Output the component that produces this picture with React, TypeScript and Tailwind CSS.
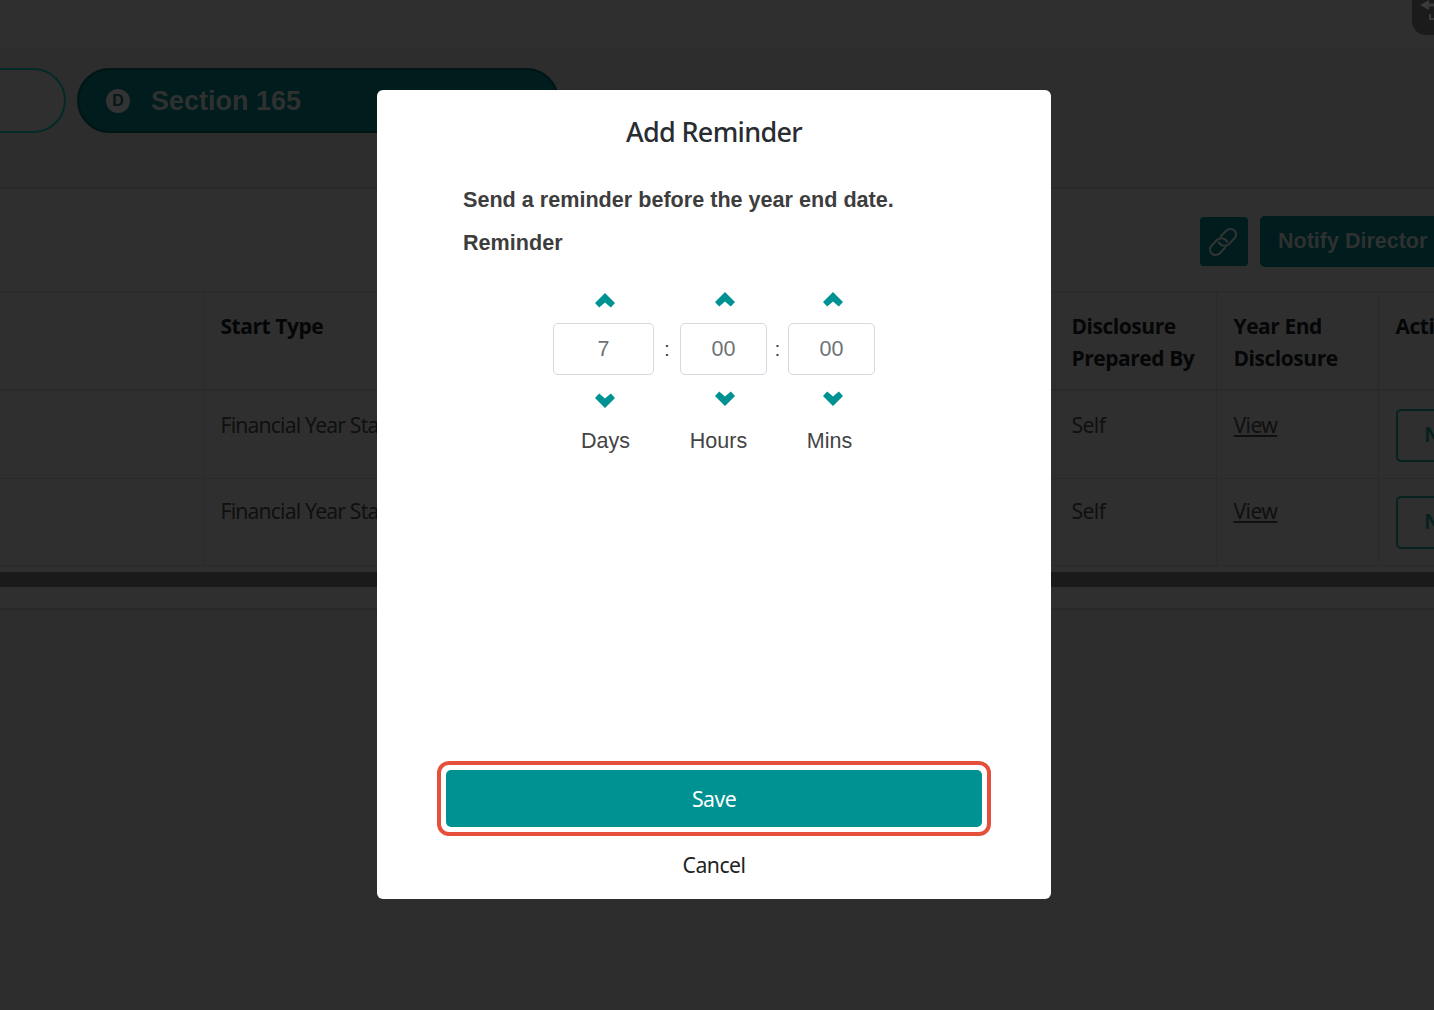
import React, { useState } from 'react';

interface StepperProps {
  label: string;
  value: string;
  width: string;
  up: string;
  down: string;
  onUp: () => void;
  onDown: () => void;
  labelClass: string;
}

const Chevron = ({ down = false }: { down?: boolean }) => (
  <svg width="20" height="15" viewBox="0 0 20 15" fill="#009292" className={down ? 'rotate-180' : ''}>
    <path d="M10 0 L20 10 L15.8 14.4 L10 9.4 L4.2 14.4 L0 10 Z" />
  </svg>
);

const Stepper: React.FC<StepperProps> = ({ label, value, width, up, down, onUp, onDown, labelClass }) => (
  <div className={`flex flex-col items-center ${width}`}>
    <button onClick={onUp} className={`h-[15px] ${up}`}>
      <Chevron />
    </button>
    <input
      readOnly
      value={value}
      className="h-[52px] w-full rounded-[5px] border-[1.5px] border-[#d3d9df] text-center text-[21.5px] text-[#6c7278]"
    />
    <button onClick={onDown} className={`h-[15px] ${down}`}>
      <Chevron down />
    </button>
    <span className={`text-[21.5px] leading-8 text-[#444] ${labelClass}`}>{label}</span>
  </div>
);

const rows = [
  { startType: 'Financial Year Start', preparedBy: 'Self', height: 'h-[89px]', textPad: 'pt-[18px]', buttonPad: 'pt-[18px]' },
  { startType: 'Financial Year Start', preparedBy: 'Self', height: 'h-[87px]', textPad: 'pt-[16px]', buttonPad: 'pt-[17px]' },
];

const pad = (n: number) => String(n).padStart(2, '0');

export default function App() {
  const [days, setDays] = useState(7);
  const [hours, setHours] = useState(0);
  const [mins, setMins] = useState(0);

  return (
    <div className="relative h-[1010px] w-[1434px] overflow-hidden bg-[#2d2d2d] font-['Liberation_Sans',sans-serif]">
      {/* Page behind the dialog */}
      <header className="flex h-[47px] justify-end bg-[#2f2f2f]">
        <div className="h-[35px] w-[22px] overflow-hidden rounded-bl-[14px] bg-[#1b1b1b]">
          <svg width="22" height="35" viewBox="0 0 22 35" fill="#3a3a3a">
            <path d="M8 5 L17 0 V3.5 H22 V6.5 H17 V10 Z" />
            <path d="M17 14 h2 v4 h3 v2 h-5 Z" />
          </svg>
        </div>
      </header>

      <nav className="flex h-[140px] gap-[11px] pt-[21px]">
        <div className="h-[65px] w-[66px] rounded-r-full border-[2.5px] border-l-0 border-[#022b27] bg-[#2f2f2f]" />
        <div className="flex h-[65px] w-[482px] items-center rounded-full border-2 border-[#011514] bg-[#001c1c] pl-7">
          <span className="-ml-px flex size-6 items-center justify-center rounded-full bg-[#333] text-[16px] font-bold text-[#061717]">D</span>
          <span className="mt-px ml-[21px] text-[27px] font-bold text-[#2f3131]">Section 165</span>
        </div>
      </nav>

      <main className="h-[423px] border-y-2 border-[#292929] bg-[#2f2f2f]">
        <div className="flex h-[102px] pt-[27px] pl-[1200px]">
          <div className="mt-px flex h-[49px] w-12 shrink-0 items-center justify-center rounded bg-[#001c1c]">
            <svg width="30" height="30" viewBox="0 0 30 30" fill="none" stroke="#333535" strokeWidth="2.1" strokeLinecap="round" className="-ml-0.5">
              <path d="M12.8 9.2 L18.2 3.8 C20.6 1.4 24.2 1.4 26.4 3.6 C28.6 5.8 28.6 9.2 26.3 11.6 L21 17 C18 19.8 13.2 19.3 10.8 15.4" />
              <path d="M17.2 20.8 L11.8 26.2 C9.4 28.6 5.8 28.6 3.6 26.4 C1.4 24.2 1.4 20.8 3.7 18.4 L9 13 C12 10.2 16.8 10.7 19.2 14.6" />
            </svg>
          </div>
          <div className="ml-3 h-[51px] w-[200px] shrink-0 rounded-[5px] bg-[#001c1c] pl-[18px] text-[21.5px] leading-[50px] font-bold whitespace-nowrap text-[#2f3131]">
            Notify Director
          </div>
        </div>

        <table className="w-[1600px] table-fixed border-collapse font-['Noto_Sans',sans-serif] text-[21.2px] tracking-[-0.03em] text-[#101010]">
          <colgroup>
            <col className="w-[203px]" />
            <col className="w-[851px]" />
            <col className="w-[162px]" />
            <col className="w-[162px]" />
            <col className="w-[222px]" />
          </colgroup>
          <thead>
            <tr className="h-[98px] border-t border-b-2 border-[#2a2a2a] text-left align-top font-['Open_Sans',sans-serif] text-[21px] leading-8 tracking-[-0.022em] text-[#050607]">
              <th className="border-r border-[#2a2a2a]" />
              <th className="border-r border-[#2a2a2a] px-[17px] pt-[18px]">Start Type</th>
              <th className="border-r border-[#2a2a2a] px-[17px] pt-[18px]">Disclosure<br />Prepared&nbsp;By</th>
              <th className="border-r border-[#2a2a2a] px-[17px] pt-[18px]">Year End<br />Disclosure</th>
              <th className="px-[17px] pt-[18px]">Action</th>
            </tr>
          </thead>
          <tbody>
            {rows.map((row, idx) => (
              <tr key={idx} className={`border-b border-[#2a2a2a] align-top leading-8 ${row.height}`}>
                <td className="border-r border-[#2a2a2a]" />
                <td className={`border-r border-[#2a2a2a] px-[17px] tracking-[-0.04em] ${row.textPad}`}>{row.startType}</td>
                <td className={`border-r border-[#2a2a2a] px-[17px] ${row.textPad}`}>{row.preparedBy}</td>
                <td className={`border-r border-[#2a2a2a] px-[17px] ${row.textPad}`}>
                  <a className="underline">View</a>
                </td>
                <td className={`px-[17px] ${row.buttonPad}`}>
                  <div className="h-[53px] w-[120px] rounded-[5px] border-2 border-[#07211f] pl-[27px] font-['Liberation_Sans',sans-serif] text-[21.5px] leading-[49px] font-bold tracking-normal text-[#07211f]">
                    Notify
                  </div>
                </td>
              </tr>
            ))}
          </tbody>
        </table>
        <div className="mt-[6px] h-[15px] bg-[#1a1a1a]" />
      </main>

      {/* Dialog */}
      <section className="absolute top-[90px] left-[377px] flex h-[809px] w-[674px] flex-col rounded-[6px] bg-white">
        <h2 className="pt-[22px] text-center font-['Noto_Sans',sans-serif] text-[27px] leading-[40px] font-medium tracking-[-0.025em] text-[#292d32]">
          Add Reminder
        </h2>
        <div className="mt-[32px] ml-[86px] text-[21.6px] leading-8 font-bold text-[#3d3d3d]">
          <p>Send a reminder before the year end date.</p>
          <p className="mt-[11px]">Reminder</p>
        </div>

        <div className="mt-[34px] flex justify-center">
          <Stepper label="Days" value={String(days)} width="w-[101px]" up="mb-[15px] ml-0.5" down="mt-[18px] ml-[3px]" labelClass="mt-[17px] ml-1"
            onUp={() => setDays(days + 1)} onDown={() => setDays(Math.max(0, days - 1))} />
          <span className="w-[26px] pt-[40px] text-center text-[21px] leading-8 text-[#444]">:</span>
          <Stepper label="Hours" value={pad(hours)} width="w-[87px]" up="-mt-px mb-[16px] ml-0.5" down="mt-[16px] ml-[3px]" labelClass="mt-[19px] -ml-[10px]"
            onUp={() => setHours((hours + 1) % 24)} onDown={() => setHours((hours + 23) % 24)} />
          <span className="w-[21px] pt-[40px] text-center text-[21px] leading-8 text-[#444]">:</span>
          <Stepper label="Mins" value={pad(mins)} width="w-[87px]" up="-mt-px mb-[16px] ml-0.5" down="mt-[16px] ml-[3px]" labelClass="mt-[19px] -ml-1"
            onUp={() => setMins((mins + 1) % 60)} onDown={() => setMins((mins + 59) % 60)} />
        </div>

        <div className="mt-auto flex flex-col items-center pb-[16px] font-['Noto_Sans',sans-serif] text-[21.2px] tracking-[-0.025em]">
          <div className="h-[75px] w-[554px] rounded-[12px] border-4 border-[#e5503c] p-[5px]">
            <button className="h-[57px] w-full rounded-[5px] bg-[#009292] text-white">Save</button>
          </div>
          <button className="mt-[11px] h-9 text-[#222]">Cancel</button>
        </div>
      </section>
    </div>
  );
}
